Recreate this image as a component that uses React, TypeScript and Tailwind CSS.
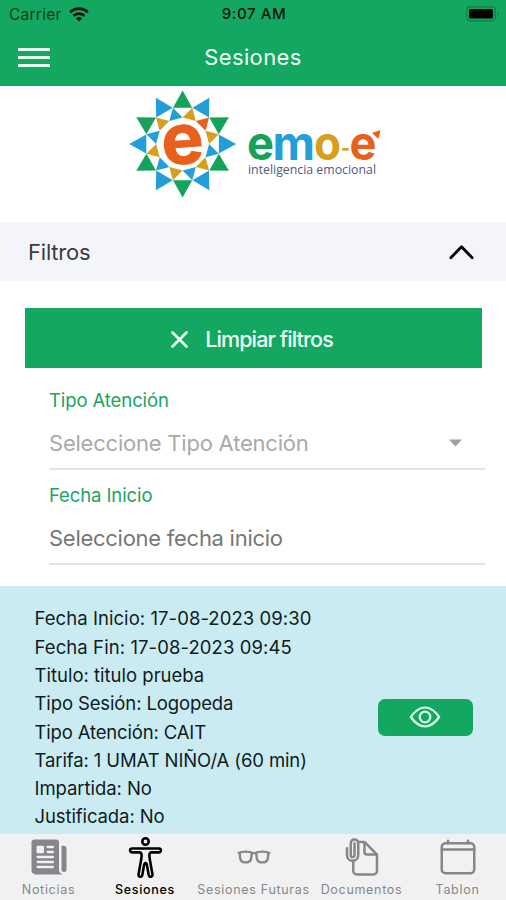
import type { ReactNode } from "react";
import {
  IoNewspaper,
  IoBodyOutline,
  IoGlassesOutline,
  IoDocumentAttachOutline,
  IoCalendarClearOutline,
} from "react-icons/io5";

const INNER_COLORS = [
  "#d6a01c", "#e8601c", "#d6a01c", "#229fd9", "#d6a01c", "#229fd9",
  "#d6a01c", "#229fd9", "#d6a01c", "#229fd9", "#d6a01c", "#229fd9",
];

const SESSION = [
  { text: "Fecha Inicio: 17-08-2023 09:30", className: "tracking-[0.06px]" },
  { text: "Fecha Fin: 17-08-2023 09:45", className: "tracking-[0.09px]" },
  { text: "Titulo: titulo prueba", className: "tracking-[0px]" },
  { text: "Tipo Sesión: Logopeda", className: "tracking-[-0.12px]" },
  { text: "Tipo Atención: CAIT", className: "tracking-[-0.16px]" },
  { text: "Tarifa: 1 UMAT NIÑO/A (60 min)", className: "tracking-[-0.11px]" },
  { text: "Impartida: No", className: "tracking-[-0.06px]" },
  { text: "Justificada: No", className: "tracking-[-0.1px]" },
];

function polar(r: number, deg: number) {
  const a = (deg * Math.PI) / 180;
  return `${(r * Math.sin(a)).toFixed(2)},${(-r * Math.cos(a)).toFixed(2)}`;
}

function Logo() {
  const steps = Array.from({ length: 12 }, (_, i) => i * 30);
  return (
    <svg width="260" height="112" viewBox="126 88 260 112">
      <g transform="translate(182.6 144)">
        {steps.map((deg, i) => (
          <polygon
            key={`o${deg}`}
            points={`${polar(53.5, deg)} ${polar(37.5, deg - 14.8)} ${polar(37.5, deg + 14.8)}`}
            fill={i % 2 === 0 ? "#15a35b" : "#229fd9"}
          />
        ))}
        {steps.map((deg, i) => (
          <polygon
            key={`i${deg}`}
            points={`${polar(37.5, deg + 15)} ${polar(26.5, deg)} ${polar(26.5, deg + 30)}`}
            fill={INNER_COLORS[i]}
          />
        ))}
        <circle r="25" fill="#fff" />
      </g>
      <g fontFamily="'Inter', sans-serif" fontWeight="700">
        <text x="161.500" y="163.500" fontSize="70" fill="#e8601c" stroke="#e8601c" textLength="42" lengthAdjust="spacingAndGlyphs" transform="rotate(-4 183 144)">e</text>
        <g fontSize="47">
          <text x="247" y="159.500" fill="#15a35b" textLength="27" lengthAdjust="spacingAndGlyphs">e</text>
          <text x="272.500" y="159.500" fill="#229fd9" textLength="42.500" lengthAdjust="spacingAndGlyphs">m</text>
          <text x="314" y="159.500" fill="#d6a01c" textLength="27" lengthAdjust="spacingAndGlyphs">o</text>
          <text x="341" y="156" fontSize="22" fill="#d6a01c" textLength="9" lengthAdjust="spacingAndGlyphs">-</text>
          <text x="349.500" y="159.500" fill="#e8601c" textLength="27" lengthAdjust="spacingAndGlyphs">e</text>
        </g>
      </g>
      <polygon points="372,133 380.500,130 378.500,139" fill="#e8601c" />
      <text x="248" y="174" fontFamily="'Open Sans', sans-serif" fontSize="12" fill="#4c5b80" textLength="128" lengthAdjust="spacingAndGlyphs">
        inteligencia emocional
      </text>
    </svg>
  );
}

function StatusBar() {
  return (
    <div className="grid h-[29px] grid-cols-3 items-center pl-[9px] pr-[6px] text-[15.5px] text-[#0b3a22]">
      <div className="flex items-center gap-[7px]">
        <span className="tracking-[0.25px]">Carrier</span>
        <svg width="20" height="15" viewBox="0 0 20 15" fill="none" stroke="#06150d" strokeWidth="2.600">
          <path d="M1.200 5.200a12.600 12.600 0 0 1 17.600 0" />
          <path d="M4.500 8.800a8 8 0 0 1 11 0" />
          <path d="M10 14.500 7 11.400a4.300 4.300 0 0 1 6 0z" fill="#06150d" stroke="none" />
        </svg>
      </div>
      <span className="pr-px text-center text-[15px] font-medium tracking-[0.6px] text-[#06150d]">9:07 AM</span>
      <svg className="mb-[2px] justify-self-end" width="34" height="16" viewBox="0 0 34 16">
        <rect x="0.800" y="0.800" width="28.400" height="14" rx="3.500" fill="none" stroke="#0b7f47" strokeWidth="1.200" />
        <rect x="3" y="3" width="24" height="9.600" rx="1.500" fill="#000" />
        <path d="M31.500 5.500v4.500q2-2.250 0-4.500" fill="#0b6b3d" />
      </svg>
    </div>
  );
}

function Field({ label, children }: { label: string; children: ReactNode }) {
  return (
    <div className="flex h-[95px] flex-col">
      <label className="flex h-[38px] items-center text-[18.5px] tracking-[-0.1px] text-[#1aa364]">{label}</label>
      <div className="flex h-[50px] items-center justify-between border-b-2 border-[#e4e4e4] pr-[23px] pb-[2px] text-[22px]">
        {children}
      </div>
    </div>
  );
}

function Tab({ icon, label, active, className }: { icon: ReactNode; label: string; active?: boolean; className: string }) {
  return (
    <div className={`flex flex-col items-center ${active ? "font-medium text-black" : "text-[#85878a]"} ${className}`}>
      <div className="flex h-[46px] items-center justify-center">{icon}</div>
      <span className="text-[12.5px] leading-5 whitespace-nowrap tracking-[0.7px]">{label}</span>
    </div>
  );
}

export default function App() {
  return (
    <div className="flex h-[900px] w-[506px] flex-col overflow-hidden bg-white font-['Inter',sans-serif]">
      <header className="h-[86px] shrink-0 bg-[#14a762]">
        <StatusBar />
        <div className="grid h-[57px] grid-cols-[1fr_auto_1fr] items-center px-[18px]">
          <button className="flex w-8 flex-col gap-[5px]" aria-label="Menú">
            <span className="h-[3px] bg-[#e8fbef]" />
            <span className="h-[3px] bg-[#e8fbef]" />
            <span className="h-[3px] bg-[#e8fbef]" />
          </button>
          <h1 className="text-[22px] tracking-[0.4px] text-[#ecfff4]">Sesiones</h1>
        </div>
      </header>

      {/* Logo */}
      <div className="flex h-[136px] shrink-0 justify-center pt-[2px] pl-[6px]">
        <Logo />
      </div>

      {/* Filters */}
      <div className="flex h-[59px] shrink-0 items-center justify-between bg-[#f4f5f9] pr-8 pl-7">
        <span className="pt-px text-[22px] tracking-[-0.2px] text-[#3c3c3e]">Filtros</span>
        <svg width="25" height="16" viewBox="0 0 25 16" fill="none" stroke="#000" strokeWidth="2.800" strokeLinecap="round" strokeLinejoin="round">
          <path d="m1.800 13.800 10.700-11 10.700 11" />
        </svg>
      </div>

      <div className="h-[305px] shrink-0 pt-[27px]">
        <button className="ml-[25px] flex h-[60px] w-[457px] items-center justify-center gap-[17px] bg-[#14a762] pt-[2px] pr-[3px] text-[#ecfff4]">
          <svg width="17" height="17" viewBox="0 0 17 17" stroke="currentColor" strokeWidth="2.600" strokeLinecap="round">
            <path d="m1.500 1.500 14 14m0-14-14 14" />
          </svg>
          <span className="text-[21.5px] font-medium tracking-[-0.87px]">Limpiar filtros</span>
        </button>
        <div className="mt-[14px] ml-[49px] w-[436px]">
          <Field label="Tipo Atención">
            <span className="tracking-[-0.22px] text-[#a9a9a9]">Seleccione Tipo Atención</span>
            <svg width="13" height="8" viewBox="0 0 13 8">
              <path d="M0 0.500h13L6.500 7.500z" fill="#a0a0a0" />
            </svg>
          </Field>
          <Field label="Fecha Inicio">
            <span className="tracking-[-0.27px] text-[#777]">Seleccione fecha inicio</span>
          </Field>
        </div>
      </div>

      {/* Session card */}
      <div className="flex min-h-0 flex-1 items-start justify-between bg-[#caebf1] pt-[18.4px] pr-[33px] pl-[34.5px]">
        <div className="text-[18.5px] leading-[28.3px] whitespace-nowrap text-[#101b22]">
          {SESSION.map((row) => (
            <p key={row.text} className={row.className}>
              {row.text}
            </p>
          ))}
        </div>
        <button className="mt-[94.6px] flex h-[37px] w-[95px] items-center justify-center rounded-[7px] bg-[#14a762] pr-[2px]" aria-label="Ver sesión">
          <svg width="32" height="22" viewBox="0 0 32 22" fill="none" stroke="#d9ffe9" strokeWidth="2.200">
            <path d="M1.800 11C6 5 11 1.500 16 1.500S26 5 30.200 11C26 17 21 20.500 16 20.500S6 17 1.800 11z" strokeLinejoin="round" />
            <circle cx="16" cy="11" r="5.300" />
          </svg>
        </button>
      </div>

      {/* Tab bar */}
      <nav className="flex h-[67px] shrink-0 border-t border-[#dfe4e4] bg-[#f1f1f1]">
        <Tab className="w-[97px]" icon={<IoNewspaper size={40} />} label="Noticias" />
        <Tab className="w-24" icon={<IoBodyOutline size={41} />} label="Sesiones" active />
        <Tab className="w-[121px]" icon={<IoGlassesOutline size={38} />} label="Sesiones Futuras" />
        <Tab className="w-[95px]" icon={<IoDocumentAttachOutline size={40} />} label="Documentos" />
        <Tab className="w-[97px]" icon={<IoCalendarClearOutline size={40} />} label="Tablon" />
      </nav>
    </div>
  );
}
